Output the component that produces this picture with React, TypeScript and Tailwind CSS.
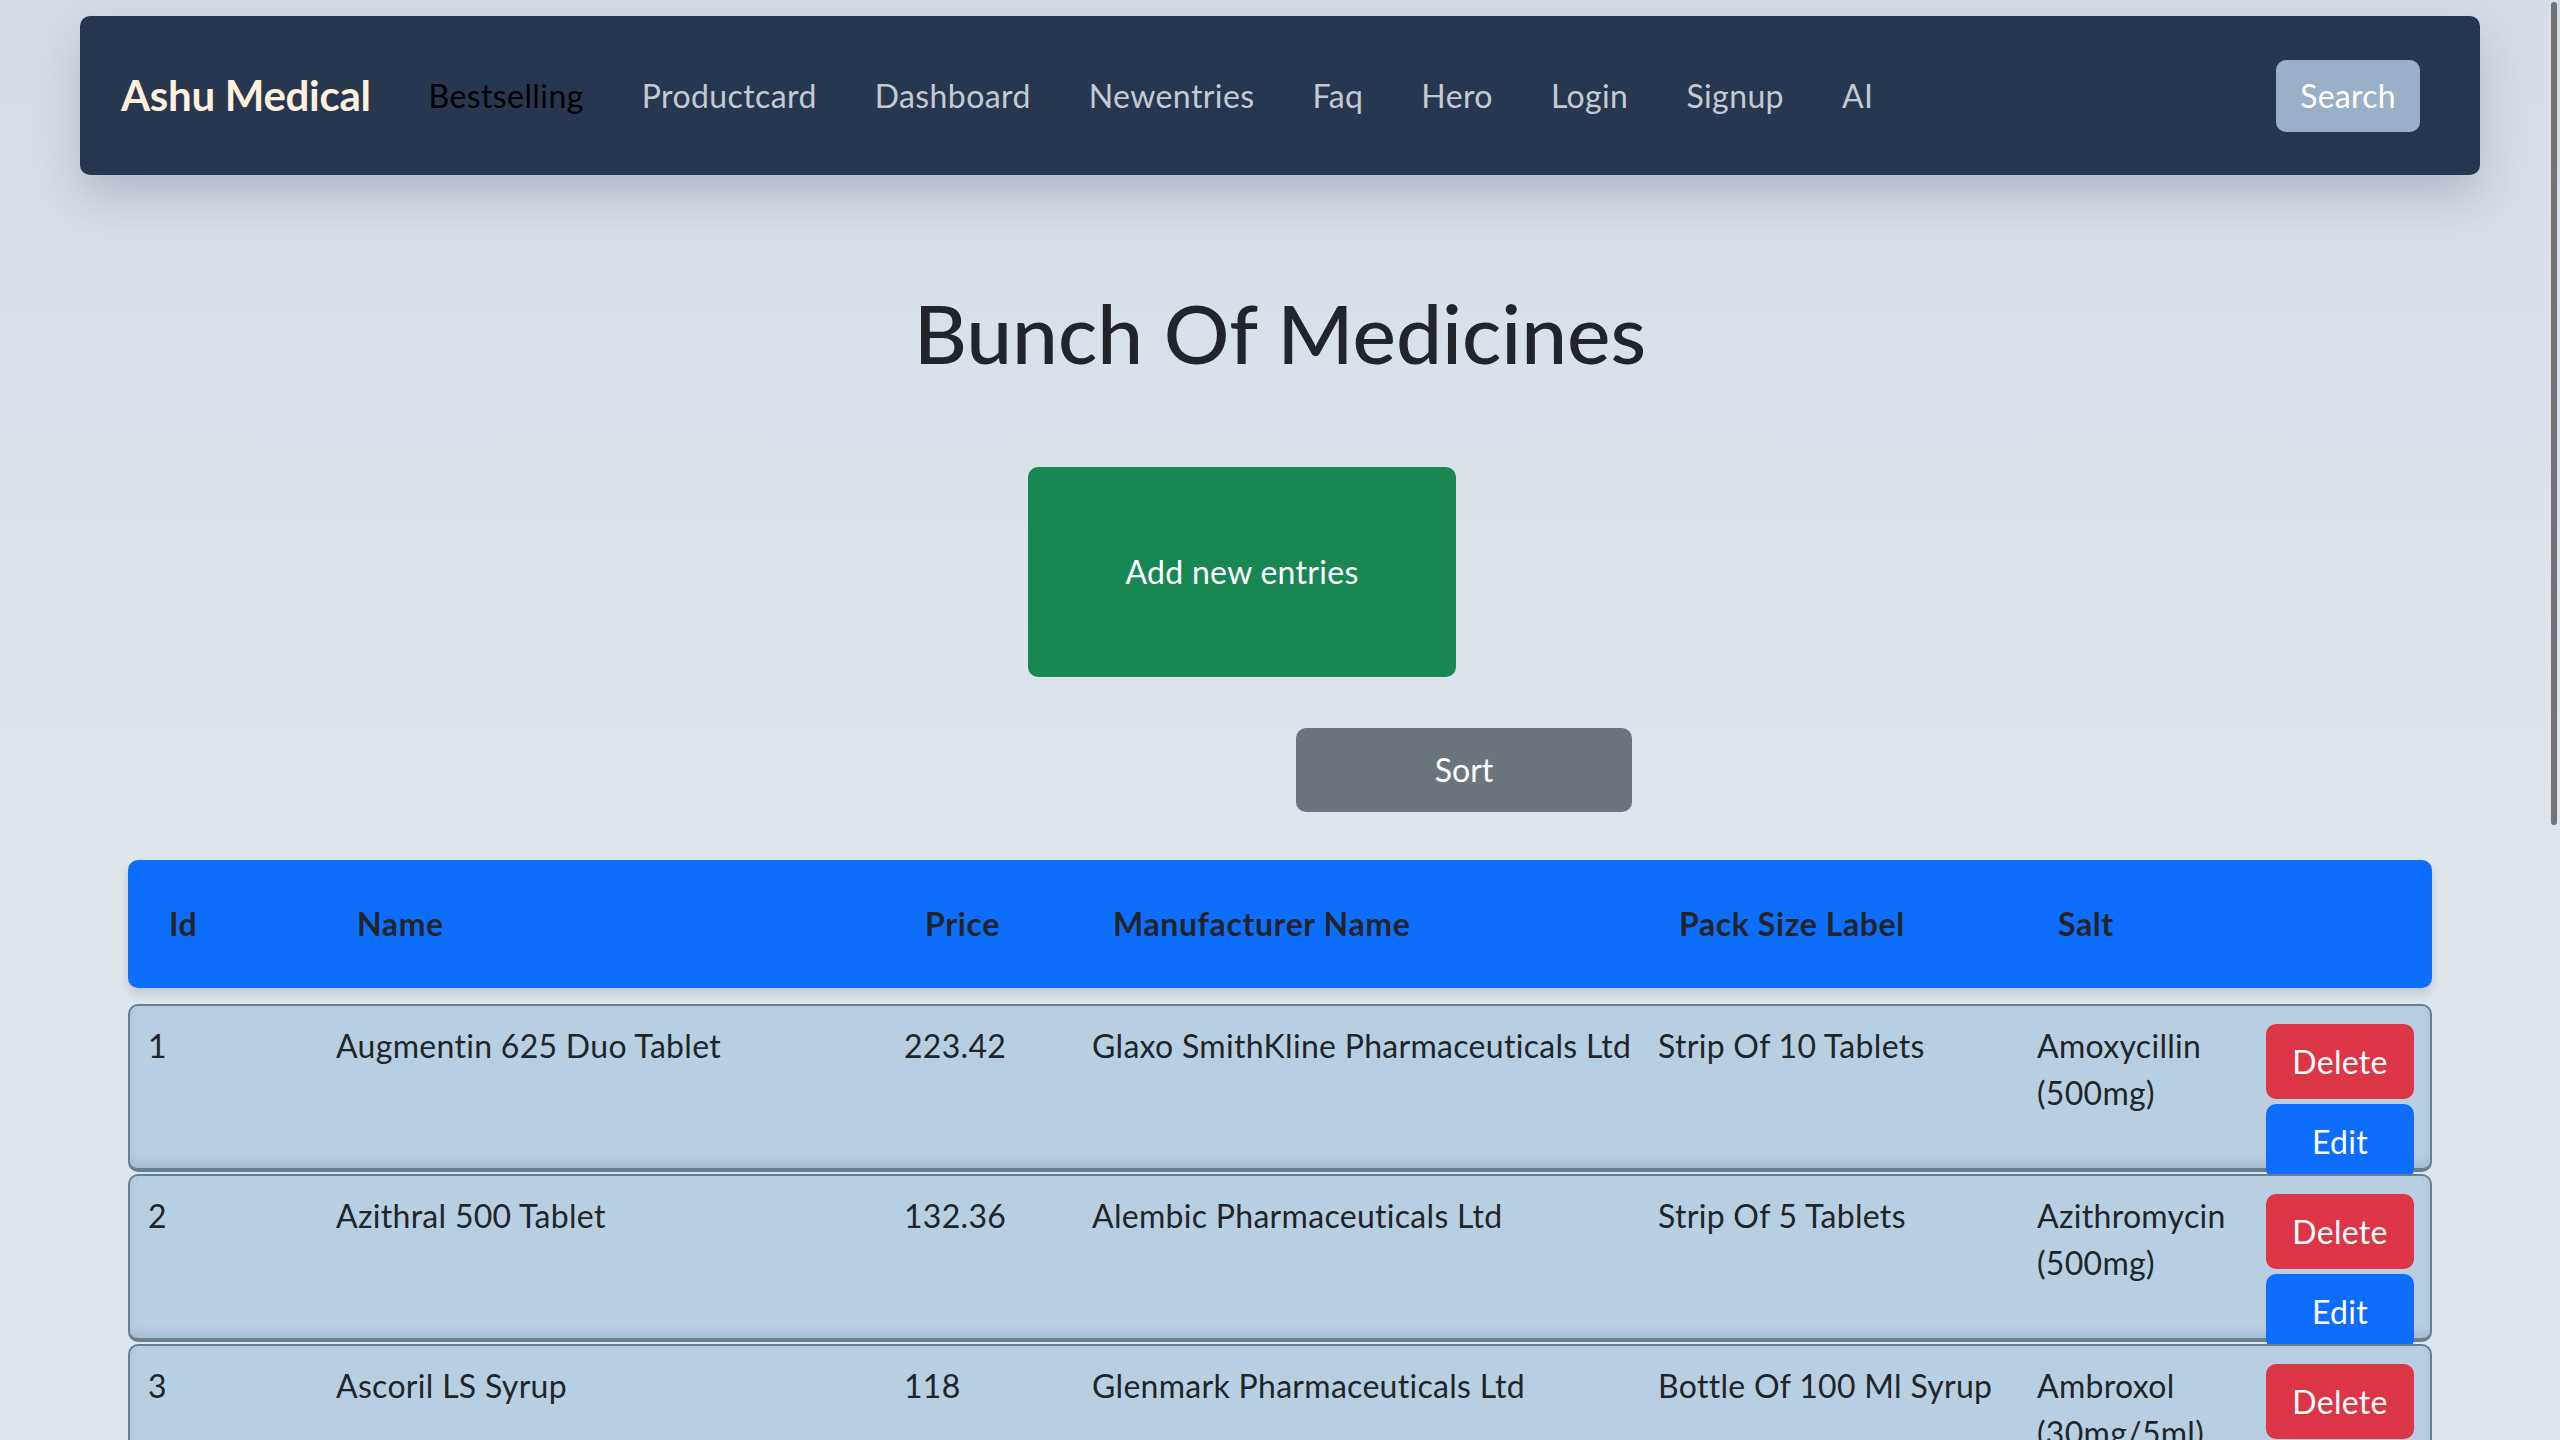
import React from 'react';

const links = ['Bestselling', 'Productcard', 'Dashboard', 'Newentries', 'Faq', 'Hero', 'Login', 'Signup', 'AI'];

const medicines = [
  { id: 1, name: 'Augmentin 625 Duo Tablet', price: '223.42', maker: 'Glaxo SmithKline Pharmaceuticals Ltd', pack: 'Strip Of 10 Tablets', salt: ['Amoxycillin', '(500mg)'] },
  { id: 2, name: 'Azithral 500 Tablet', price: '132.36', maker: 'Alembic Pharmaceuticals Ltd', pack: 'Strip Of 5 Tablets', salt: ['Azithromycin', '(500mg)'] },
  { id: 3, name: 'Ascoril LS Syrup', price: '118', maker: 'Glenmark Pharmaceuticals Ltd', pack: 'Bottle Of 100 Ml Syrup', salt: ['Ambroxol', '(30mg/5ml)'] },
];

const cols = 'grid grid-cols-[188px_568px_188px_566px_379px_229px_148px]';

const Navbar: React.FC = () => (
  <nav className="mx-[80px] mt-[16px] h-[159px] rounded-[10px] bg-[#283750] shadow-[0_22px_45px_rgba(40,55,80,0.22)] flex items-center pl-[41px] pr-[60px]">
    <span className="text-[42px] font-bold text-[#fff1dc] mr-[29px] tracking-[-0.3px]">Ashu Medical</span>
    <ul className="flex items-center">
      {links.map((l, i) => (
        <li key={l} className={`px-[29px] text-[32px] tracking-[0.4px] ${i === 0 ? 'text-black' : 'text-[#c5cad1]'}`}>{l}</li>
      ))}
    </ul>
    <button className="ml-auto w-[144px] h-[72px] rounded-[10px] bg-[#9aafc8] text-white text-[32px] tracking-[0.2px]">Search</button>
  </nav>
);

export default function App() {
  return (
    <div
      className="relative h-[1440px] overflow-hidden bg-gradient-to-b from-[#d5dde6] via-[#dce4ec] to-[#dfe6ee] text-[#212529]"
      style={{ fontFamily: 'Lato, "Open Sans", sans-serif' }}
    >
      <Navbar />

      <h1 className="mt-[109px] text-center text-[82px] leading-[96px] font-medium">Bunch Of Medicines</h1>

      <div className="mt-[87px] flex flex-col">
        <button className="ml-[1028px] w-[428px] h-[210px] rounded-[10px] bg-[#198754] text-white text-[32px] tracking-[0.3px]">Add new entries</button>
        <button className="ml-[1296px] mt-[51px] w-[336px] h-[84px] rounded-[10px] bg-[#6c757d] text-white text-[32px]">Sort</button>
      </div>

      <div className="mx-[128px] mt-[48px]">
        <div className={`${cols} h-[128px] items-center rounded-[10px] bg-[#0d6efd] pl-[41px] font-bold text-[32px] tracking-[0.6px] shadow-[0_6px_10px_rgba(0,0,0,0.12)]`}>
          <div>Id</div>
          <div>Name</div>
          <div>Price</div>
          <div className="whitespace-nowrap">Manufacturer Name</div>
          <div className="whitespace-nowrap">Pack Size Label</div>
          <div>Salt</div>
          <div></div>
        </div>

        <div className="mt-[16px] flex flex-col gap-[2px]">
          {medicines.map((m) => (
            <div
              key={m.id}
              className={`${cols} h-[168px] items-start rounded-[10px] border-2 border-b-[4px] border-[#687f92] bg-[#b8cfe2] pl-[18px] pt-[16px] text-[32px] leading-[47px] tracking-[0.3px] shadow-[inset_0_-6px_8px_rgba(90,115,135,0.18)]`}
            >
              <div>{m.id}</div>
              <div>{m.name}</div>
              <div>{m.price}</div>
              <div className="whitespace-nowrap">{m.maker}</div>
              <div className="whitespace-nowrap">{m.pack}</div>
              <div>
                {m.salt.map((s) => (
                  <div key={s}>{s}</div>
                ))}
              </div>
              <div className="mt-[2px] flex flex-col gap-[5px]">
                <button className="h-[75px] w-[148px] rounded-[10px] bg-[#dc3545] text-white text-[32px]">Delete</button>
                <button className="h-[75px] w-[148px] rounded-[10px] bg-[#0d6efd] text-white text-[32px]">Edit</button>
              </div>
            </div>
          ))}
        </div>
      </div>

      <div className="absolute right-[3px] top-[2px] h-[823px] w-[6px] rounded-full bg-[#737373]" />
    </div>
  );
}
